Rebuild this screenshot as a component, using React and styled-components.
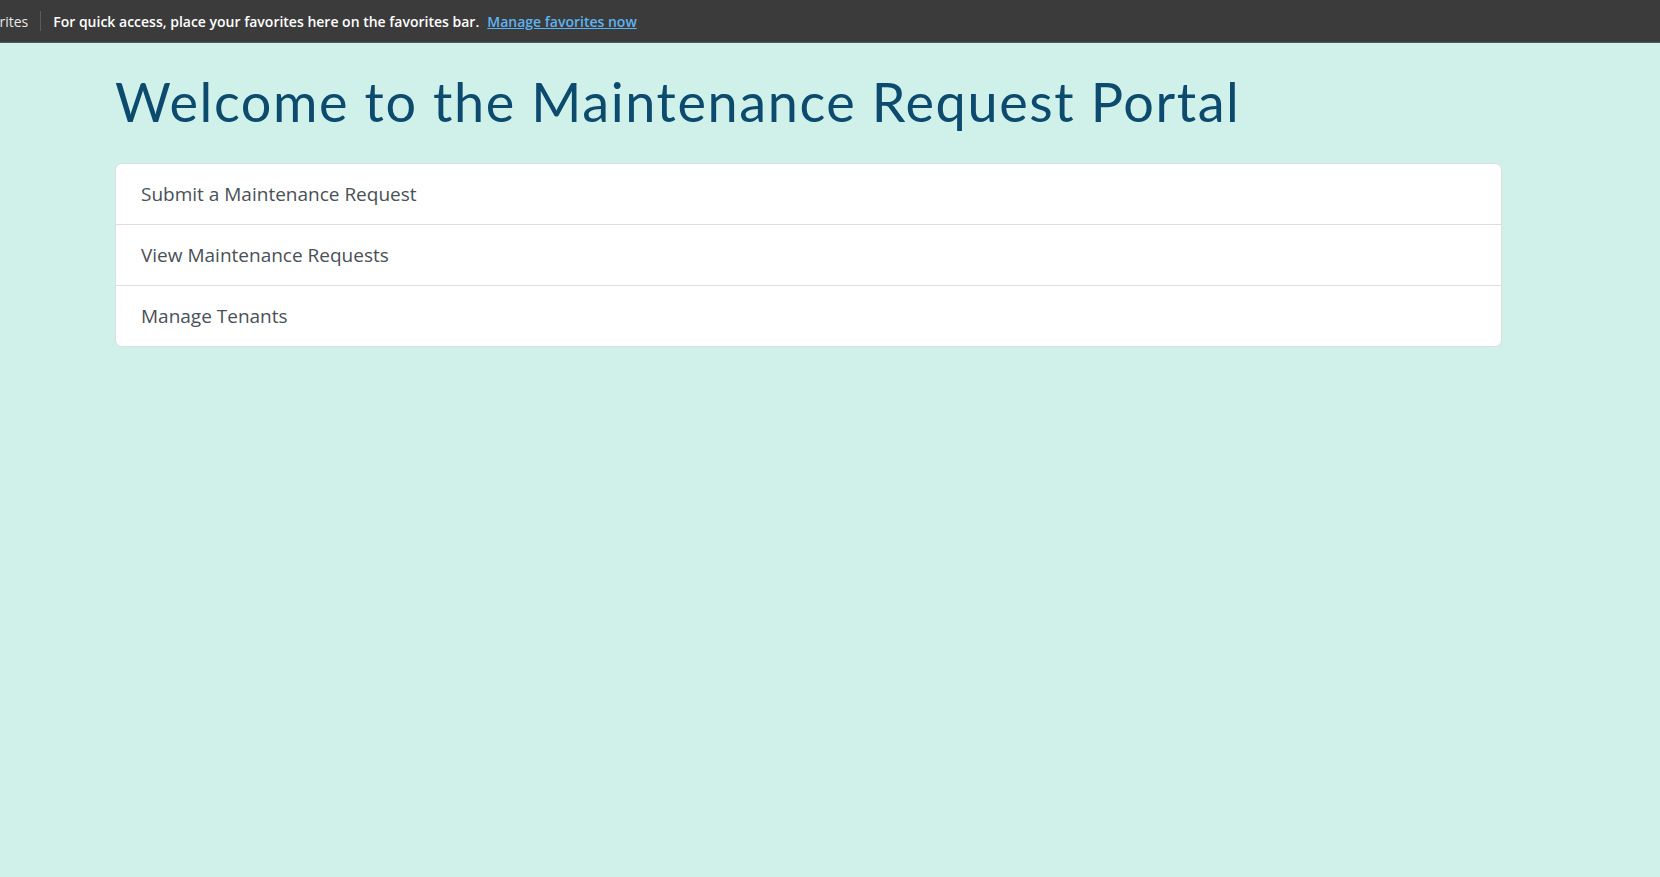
import React from 'react';
import styled, { createGlobalStyle } from 'styled-components';

const GlobalStyle = createGlobalStyle`
    html, body {
        margin: 0;
        padding: 0;
        background: #d0f0ea;
        height: 100%;
    }
    #root {
        min-height: 100vh;
    }
`;

const FavoritesBar = styled.div`
    height: 42px;
    background: #3b3b3b;
    border-bottom: 1px solid #5a5a5a;
    display: flex;
    align-items: center;
    font-family: 'Open Sans', 'Liberation Sans', sans-serif;
    font-size: 14px;
    color: #ffffff;
    white-space: nowrap;
    overflow: hidden;
`;

const BarLabel = styled.span`
    font-weight: 400;
    color: #e8e8e8;
    margin-left: -31px;
    padding-right: 12px;
`;

const Divider = styled.span`
    width: 1px;
    height: 20px;
    background: #5c5c5c;
`;

const BarText = styled.span`
    font-weight: 600;
    margin-left: 12px;
`;

const BarLink = styled.a`
    margin-left: 8px;
    font-weight: 600;
    color: #5eb3f2;
    text-decoration: underline;
    cursor: pointer;
`;

const Page = styled.main`
    padding: 22px 158px 40px 115px;
`;

const Title = styled.h1`
    margin: 0 0 24px 0;
    font-family: 'Lato', 'Open Sans', sans-serif;
    font-weight: 400;
    font-size: 54px;
    line-height: 74px;
    letter-spacing: 1.6px;
    color: #0c4a6e;
`;

const ListGroup = styled.div`
    display: flex;
    flex-direction: column;
    background: #ffffff;
    border: 1px solid #dcdedf;
    border-radius: 7px;
    overflow: hidden;
`;

const ListItem = styled.a`
    display: block;
    padding: 0 25px;
    height: 60px;
    line-height: 61px;
    font-family: 'Open Sans', 'Liberation Sans', sans-serif;
    font-size: 19px;
    color: #495057;
    text-decoration: none;
    cursor: pointer;
    & + & {
        border-top: 1px solid #dcdedf;
    }
`;

const links = [
    'Submit a Maintenance Request',
    'View Maintenance Requests',
    'Manage Tenants'
];

const App = () => {
    return (
        <>
            <GlobalStyle />
            <FavoritesBar>
                <BarLabel>Favorites</BarLabel>
                <Divider />
                <BarText>For quick access, place your favorites here on the favorites bar.</BarText>
                <BarLink>Manage favorites now</BarLink>
            </FavoritesBar>
            <Page>
                <Title>Welcome to the Maintenance Request Portal</Title>
                <ListGroup>
                    {links.map((label) => (
                        <ListItem key={label}>{label}</ListItem>
                    ))}
                </ListGroup>
            </Page>
        </>
    );
};

export default App;
